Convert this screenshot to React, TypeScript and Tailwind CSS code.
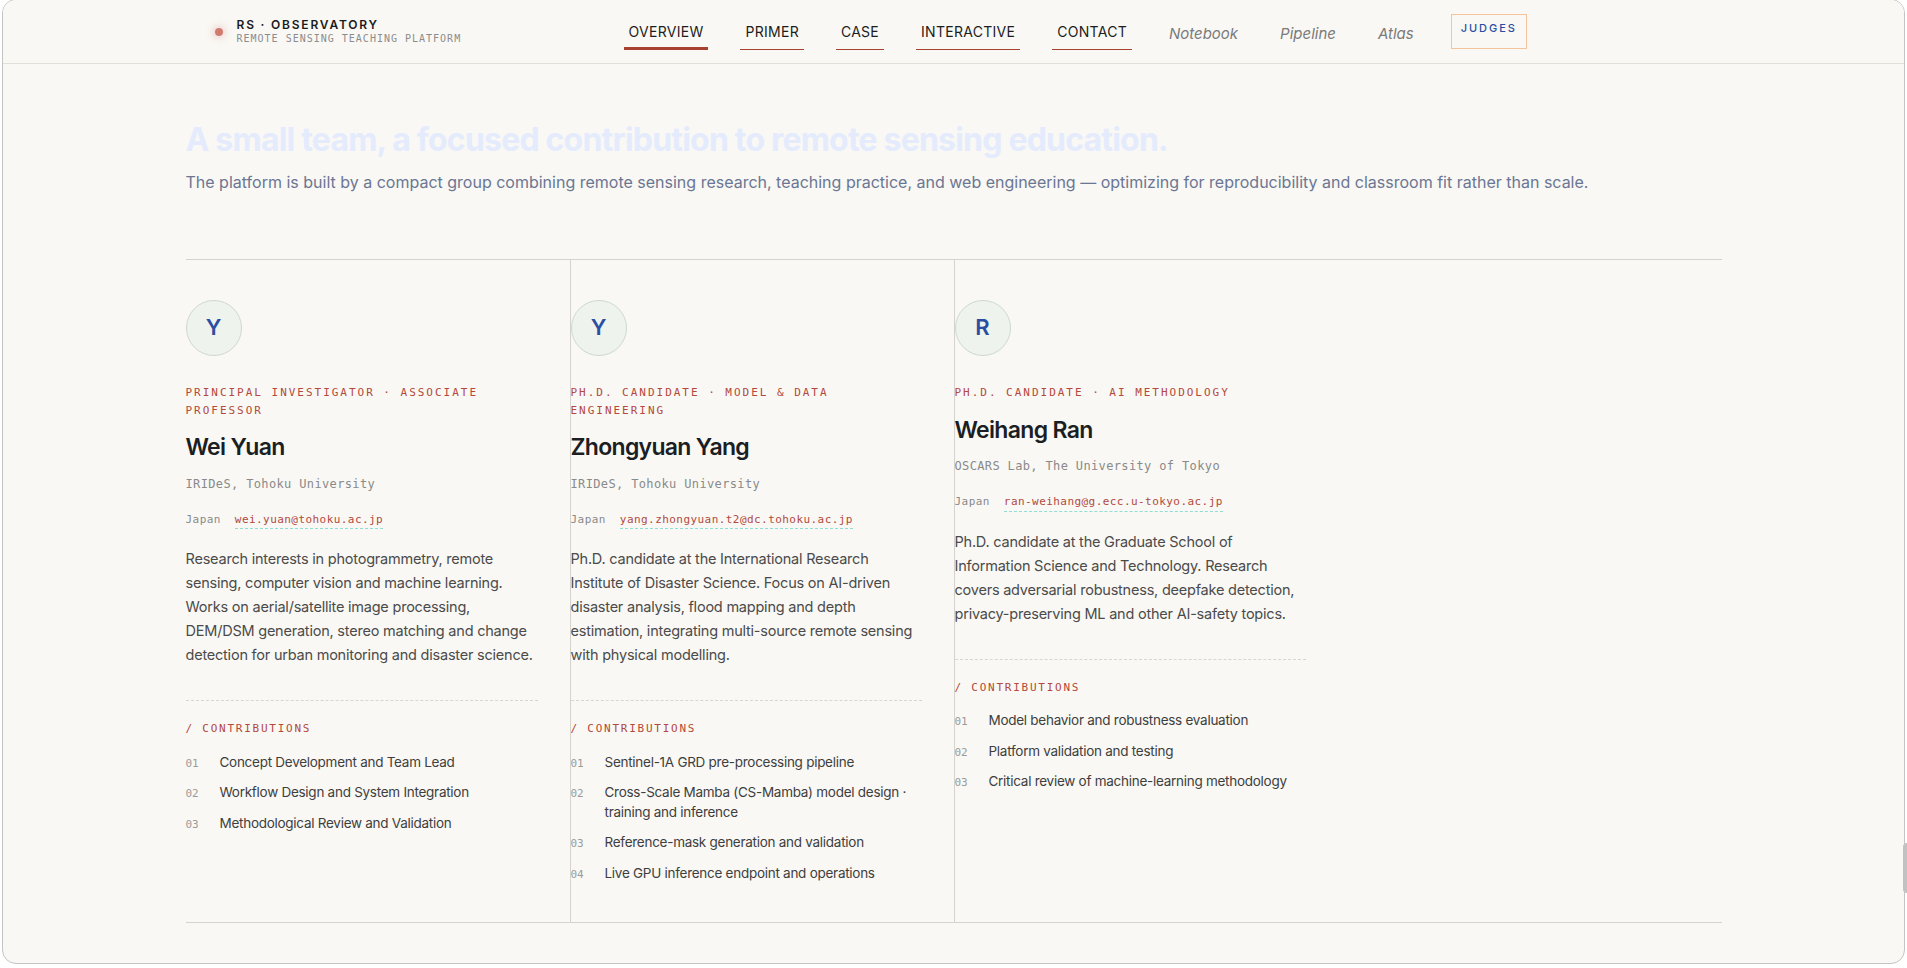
const mono = "font-['DejaVu_Sans_Mono','Liberation_Mono',monospace]";

const navLinks = [
  { name: "OVERVIEW", href: "#overview", active: true },
  { name: "PRIMER", href: "#primer" },
  { name: "CASE", href: "#case" },
  { name: "INTERACTIVE", href: "#interactive" },
  { name: "CONTACT", href: "#contact" },
];

const extraLinks = ["Notebook", "Pipeline", "Atlas"];

const team = [
  {
    initial: "Y",
    role: "Principal Investigator · Associate Professor",
    name: "Wei Yuan",
    org: "IRIDeS, Tohoku University",
    country: "Japan",
    email: "wei.yuan@tohoku.ac.jp",
    bio: "Research interests in photogrammetry, remote sensing, computer vision and machine learning. Works on aerial/satellite image processing, DEM/DSM generation, stereo matching and change detection for urban monitoring and disaster science.",
    contributions: [
      "Concept Development and Team Lead",
      "Workflow Design and System Integration",
      "Methodological Review and Validation",
    ],
  },
  {
    initial: "Y",
    role: "Ph.D. Candidate · Model & Data Engineering",
    name: "Zhongyuan Yang",
    org: "IRIDeS, Tohoku University",
    country: "Japan",
    email: "yang.zhongyuan.t2@dc.tohoku.ac.jp",
    bio: "Ph.D. candidate at the International Research Institute of Disaster Science. Focus on AI-driven disaster analysis, flood mapping and depth estimation, integrating multi-source remote sensing with physical modelling.",
    contributions: [
      "Sentinel-1A GRD pre-processing pipeline",
      "Cross-Scale Mamba (CS-Mamba) model design · training and inference",
      "Reference-mask generation and validation",
      "Live GPU inference endpoint and operations",
    ],
  },
  {
    initial: "R",
    role: "Ph.D. Candidate · AI Methodology",
    name: "Weihang Ran",
    org: "OSCARS Lab, The University of Tokyo",
    country: "Japan",
    email: "ran-weihang@g.ecc.u-tokyo.ac.jp",
    bio: "Ph.D. candidate at the Graduate School of Information Science and Technology. Research covers adversarial robustness, deepfake detection, privacy-preserving ML and other AI-safety topics.",
    contributions: [
      "Model behavior and robustness evaluation",
      "Platform validation and testing",
      "Critical review of machine-learning methodology",
    ],
  },
];

const Navbar = () => {
  return (
    <div className="h-[64px] shrink-0 border-b border-[#e2dfd8] bg-[#f9f8f4]">
      <div className="mx-auto flex h-full max-w-[1536px] items-center px-[29px]">
        <div className="flex w-[409px] items-center gap-3.5">
          <span className="h-2 w-2 rounded-full bg-[#d27a70] shadow-[0_0_6px_3px_rgba(214,120,110,0.22)]" />
          <div className="flex flex-col">
            <span className="text-[12px] font-semibold leading-[14px] tracking-[0.15em] text-[#1b1b1b]">
              RS · OBSERVATORY
            </span>
            <span className={`${mono} mt-px text-[10px] leading-[12px] tracking-[0.1em] text-[#8c8c8c]`}>
              REMOTE SENSING TEACHING PLATFORM
            </span>
          </div>
        </div>
        <nav className="flex items-center gap-8">
          {navLinks.map(({ name, href, active }) => (
            <a
              key={name}
              href={href}
              className={`px-[5px] py-2 text-[14px] leading-5 tracking-[0.02em] text-[#1d1d1d] ${
                active
                  ? "shadow-[inset_0_-3px_0_#a8412f]"
                  : "shadow-[inset_0_-1px_0_#a8412f]"
              }`}
            >
              {name}
            </a>
          ))}
          {extraLinks.map((name) => (
            <a
              key={name}
              href={`#${name.toLowerCase()}`}
              className="px-[5px] pb-[6px] pt-[10px] text-[15px] italic leading-5 text-[#7a7a7a]"
            >
              {name}
            </a>
          ))}
          <a
            href="#judges"
            className="border border-[#f4c49c] px-[9px] pb-[12px] pt-[5px] text-[11px] font-medium leading-4 tracking-[0.18em] text-[#2b4ea2]"
          >
            JUDGES
          </a>
        </nav>
      </div>
    </div>
  );
};

type Member = (typeof team)[number];

const MemberCard = ({ member, first }: { member: Member; first: boolean }) => {
  return (
    <div className={`pb-[39px] pr-8 pt-10 ${first ? "" : "border-l border-[#d6d3cc]"}`}>
      <div className="flex h-14 w-14 items-center justify-center rounded-full border border-[#cfd8d0] bg-[#eef3ee] text-[22px] font-semibold text-[#2b4ea2]">
        {member.initial}
      </div>
      <p className={`${mono} mt-7 text-[11px] uppercase leading-[1.6] tracking-[0.18em] text-[#b4493b]`}>
        {member.role}
      </p>
      <h3 className="mt-[14px] text-[23px] font-semibold leading-[1.25] tracking-[-0.03em] text-[#1b1e22]">
        {member.name}
      </h3>
      <p className={`${mono} mt-[13px] text-[12px] leading-[1.5] tracking-[0.03em] text-[#8a8a8a]`}>
        {member.org}
      </p>
      <div className={`${mono} mt-[19px] flex gap-3.5 text-[11px] leading-[1.5] tracking-[0.04em]`}>
        <span className="text-[#8a8a8a]">{member.country}</span>
        <a
          href={`mailto:${member.email}`}
          className="inline-block border-b border-dashed border-[#8fded4] text-[#b04a3e]"
        >
          {member.email}
        </a>
      </div>
      <p className="mt-[18px] text-[14.5px] leading-6 tracking-[-0.015em] text-[#4b4b4b]">
        {member.bio}
      </p>
      <div className="mt-[33px] border-t border-dashed border-[#d9d6cf] pt-5">
        <p className={`${mono} text-[11px] leading-[1.5] tracking-[0.16em] text-[#b4493b]`}>
          / CONTRIBUTIONS
        </p>
        <ul className="mt-[14px] flex flex-col gap-[10px]">
          {member.contributions.map((item, index) => (
            <li key={index} className="flex items-baseline">
              <span className={`${mono} w-[34px] shrink-0 text-[11px] text-[#9b9b9b]`}>
                {String(index + 1).padStart(2, "0")}
              </span>
              <span className="text-[13.5px] leading-5 tracking-[-0.02em] text-[#3e3e3e]">
                {item}
              </span>
            </li>
          ))}
        </ul>
      </div>
    </div>
  );
};

export default function App() {
  return (
    <div className="relative h-[968px] w-full overflow-hidden bg-white font-['Inter',sans-serif]">
      <div className="-mt-px ml-[2px] flex h-[965px] w-[1903px] flex-col overflow-hidden rounded-[14px] border border-[#c4c4c4] bg-[#f9f8f4]">
        <Navbar />
        <main className="mx-auto w-full max-w-[1536px] pt-[57px]">
          <h2 className="text-[32px] font-bold leading-[1.2] tracking-[-0.025em] text-[#e4ebfd]">
            A small team, a focused contribution to remote sensing education.
          </h2>
          <p className="mt-[11px] text-[16px] leading-[1.6] text-[#6b7693]">
            The platform is built by a compact group combining remote sensing research, teaching
            practice, and web engineering — optimizing for reproducibility and classroom fit rather
            than scale.
          </p>
          <div className="mt-[63px] grid grid-cols-4 border-y border-[#d6d3cc]">
            {team.map((member, index) => (
              <MemberCard key={member.email} member={member} first={index === 0} />
            ))}
          </div>
        </main>
      </div>
      <div className="absolute right-0 top-[843px] h-[50px] w-[4px] rounded-l-sm bg-[#c2c2c2]" />
    </div>
  );
}
